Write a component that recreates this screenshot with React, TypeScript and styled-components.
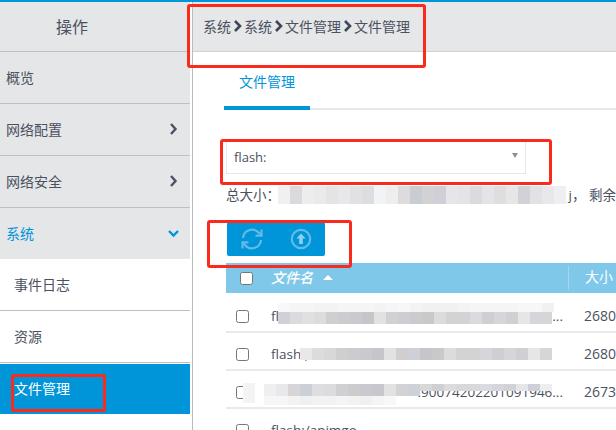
import React from "react";
import styled, { createGlobalStyle } from "styled-components";

const Global = createGlobalStyle`
  html, body { margin: 0; padding: 0; background: #fff; }
  * { box-sizing: border-box; }
`;

const Page = styled.div`
  position: relative;
  width: 616px;
  height: 430px;
  overflow: hidden;
  display: flex;
  background: #fff;
  border-top: 2px solid #0095d9;
  font-family: "Open Sans", "Noto Sans CJK SC", sans-serif;
  font-size: 14px;
  color: #4b5160;
`;

const Sidebar = styled.aside`
  width: 193px;
  height: 428px;
  flex: none;
  padding-right: 2px;
  border-right: 1px solid #b9bbbd;
`;

const SideHead = styled.div`
  height: 50px;
  background: #e4e6e8;
  border-bottom: 1px solid #bdbfc1;
  display: flex;
  align-items: center;
  justify-content: center;
  font-size: 16px;
  padding: 0 46px 1px 0;
`;

const SideItem = styled.div<{ $active?: boolean }>`
  height: ${(p) => (p.$active ? "51px" : "52px")};
  padding: 0 11px ${(p) => (p.$active ? "0" : "2px")} 6px;
  display: flex;
  align-items: center;
  justify-content: space-between;
  background: #e4e6e8;
  border-bottom: 1px solid ${(p) => (p.$active ? "#e4e6e8" : "#bdbfc1")};
  color: ${(p) => (p.$active ? "#0095d9" : "#4b5160")};
`;

const SubItem = styled.div<{ $selected?: boolean }>`
  height: ${(p) => (p.$selected ? "50px" : "52px")};
  padding: 0 14px 2px;
  display: flex;
  align-items: center;
  background: ${(p) => (p.$selected ? "#0095d9" : "#fff")};
  border-bottom: 1px solid ${(p) => (p.$selected ? "#0095d9" : "#bdbfc1")};
  color: ${(p) => (p.$selected ? "#fff" : "#4b5160")};
  margin-top: ${(p) => (p.$selected ? "1px" : "0")};
`;

const Main = styled.main`
  flex: 1;
  min-width: 0;
`;

const Crumbs = styled.div`
  height: 50px;
  padding: 0 0 2px 10px;
  display: flex;
  align-items: center;
  background: #e6e7e9;
  border-bottom: 1px solid #cfd1d3;
`;

const Sep = styled.svg`
  width: 10px;
  height: 12px;
  margin: 0 1px 0 2px;
  flex: none;
`;

const Tabs = styled.div`
  height: 58px;
  margin-left: 31px;
  display: flex;
  border-bottom: 2px solid #e6e7e9;
`;

const Tab = styled.div`
  width: 86px;
  height: 58px;
  padding-top: 4px;
  display: flex;
  align-items: center;
  justify-content: center;
  color: #0095d9;
  border-bottom: 4px solid #0095d9;
`;

const Body = styled.div`
  padding: 30px 0 0 33px;
`;

const SelectBox = styled.div`
  width: 300px;
  height: 34px;
  border: 1px solid #e6e7e9;
  display: flex;
  align-items: center;
  justify-content: space-between;
  padding: 0 7px;
  font-size: 13px;
`;

const Caret = styled.span`
  width: 0;
  height: 0;
  margin-bottom: 4px;
  border-left: 3px solid transparent;
  border-right: 3px solid transparent;
  border-top: 5px solid #8c8f94;
`;

const Total = styled.div`
  margin-top: 11px;
  height: 20px;
  line-height: 20px;
  white-space: nowrap;
  display: flex;
  justify-content: space-between;
  width: 390px;
  font-size: 13.5px;
`;

const ActionBar = styled.div`
  width: 98px;
  height: 34px;
  margin: 17px 0 0 1px;
  background: #0095d9;
  border-radius: 2px;
  display: flex;
  align-items: center;
  padding-left: 13px;
  gap: 26px;
`;

const Table = styled.div`
  margin-top: 7px;
  width: 390px;
`;

const HeadRow = styled.div`
  height: 30px;
  margin-bottom: 2px;
  background: #7fc8ea;
  display: flex;
  align-items: center;
  color: #fff;
  padding-left: 14px;
`;

const Check = styled.span`
  width: 13px;
  height: 13px;
  flex: none;
  background: #fff;
  border: 1px solid #767676;
  border-radius: 2.5px;
`;

const NameHead = styled.span`
  width: 297px;
  margin-left: 18px;
  display: flex;
  align-items: center;
  gap: 10px;
  font-weight: 500;
  font-style: italic;
  height: 24px;
  padding-bottom: 2px;
`;

const SortUp = styled.span`
  width: 0;
  height: 0;
  border-left: 5px solid transparent;
  border-right: 5px solid transparent;
  border-bottom: 5px solid #fff;
`;

const SizeHead = styled.span`
  height: 24px;
  padding-left: 16px;
  border-left: 1px solid #a3d7ef;
  line-height: 22px;
`;

const Row = styled.div`
  height: 38px;
  display: flex;
  align-items: center;
  padding: 6px 0 0 10px;
  border-bottom: 2px solid #e9eaeb;
  font-size: 13.5px;
`;

const RowName = styled.span<{ $end?: boolean }>`
  width: 292px;
  margin: 0 21px 1px 22px;
  white-space: nowrap;
  display: flex;
  justify-content: ${(p) => (p.$end ? "flex-end" : "space-between")};
`;

const RowSize = styled.span`
  font-size: 14px;
  margin-bottom: 1px;
`;

const Mosaic = styled.div<{ $x: number; $y: number }>`
  position: absolute;
  left: ${(p) => p.$x}px;
  top: ${(p) => p.$y}px;
  display: flex;
`;

const Cell = styled.i<{ $c: string; $h: number }>`
  display: block;
  width: 12px;
  height: ${(p) => p.$h}px;
  background: ${(p) => p.$c};
`;

const Mark = styled.div<{ $x: number; $y: number; $w: number; $h: number }>`
  position: absolute;
  left: ${(p) => p.$x}px;
  top: ${(p) => p.$y}px;
  width: ${(p) => p.$w}px;
  height: ${(p) => p.$h}px;
  border: 3px solid #fa2a1c;
  border-radius: 3px;
  pointer-events: none;
`;

const Chevron = ({ down, color }: { down?: boolean; color: string }) => (
  <svg width="11" height="12" viewBox="0 0 11 12">
    <path
      d={down ? "M1 4l4.5 4.5L10 4" : "M3 1l4.5 5L3 11"}
      fill="none"
      stroke={color}
      strokeWidth="2.4"
    />
  </svg>
);

const CrumbSep = () => (
  <Sep viewBox="0 0 10 12">
    <path d="M2 1l5 5-5 5" fill="none" stroke="#3f4656" strokeWidth="2.6" />
  </Sep>
);

const RefreshIcon = () => (
  <svg width="24" height="24" viewBox="0 0 24 24" fill="none" stroke="#62bae6" strokeWidth="2.2">
    <path d="M3 11a9 9 0 0 1 15.6-5.4L21 8" />
    <path d="M21.5 2.5V8.6h-6" />
    <path d="M21 13a9 9 0 0 1-15.6 5.4L3 16" />
    <path d="M2.5 21.5v-6.1h6" />
  </svg>
);

const UploadIcon = () => (
  <svg width="22" height="22" viewBox="0 0 22 22">
    <circle cx="11" cy="11" r="9.2" fill="none" stroke="#62bae6" strokeWidth="2.2" />
    <path d="M11 5.5l4.6 5h-2.8v5.5H9.2v-5.5H6.4z" fill="#8fd0ef" />
  </svg>
);

type Strip = { x: number; y: number; h: number; colors: string[] };

const strips: Strip[] = [
  { x: 278, y: 186, h: 18, colors: ["#f0f0f2", "#dcd9dd", "#eceded", "#ebeaea", "#e4e4e6", "#e8e8ea", "#e1e1e3", "#dcdde0", "#f2f3f7", "#eeeeee", "#dddbdd", "#c9ccd3", "#d2d2d4", "#d0cfd8", "#e6e6ea", "#e4e4e8", "#dbdbdf", "#e4e4e8", "#e0dde0", "#e6e6e6", "#d0d2d8", "#e2e2e6", "#e8e8ec", "#efeff1"] },
  { x: 278, y: 303, h: 9, colors: ["#f8f8f8", "#f5f5f5", "#f5f5f5", "#f3f3f3", "#f3f3f3", "#f5f5f5", "#f5f5f5", "#f5f5f5", "#f3f3f3", "#f5f5f5", "#f7f7f7", "#f3f3f3", "#f1f1f1", "#f1f1f1", "#f1f1f1", "#f3f3f3", "#f5f5f5", "#f5f5f5", "#f5f5f5", "#f5f5f5", "#f7f7f7", "#f7f7f7", "#f1f1f1"] },
  { x: 278, y: 312, h: 12, colors: ["#cfd0d8", "#dbdbde", "#e0e0e2", "#dcdcde", "#cfcfd2", "#cccccf", "#c9cad0", "#c6c6ca", "#e2e2e2", "#d2d0d3", "#cdced4", "#cbcbce", "#c9c9cc", "#dcdcde", "#d3d3d6", "#d3d3d6", "#dadadf", "#cfcfd2", "#d6d6da", "#d0d0d3", "#e6e6e6", "#d6d6da"] },
  { x: 540, y: 312, h: 12, colors: ["#d6d6da"] },
  { x: 300, y: 348, h: 12, colors: ["#e8e8ea", "#dcdcde", "#d8d8da", "#cfcfd2", "#cccccf", "#c9cad0", "#c6c6ca", "#e2e2e2", "#d0ced1", "#cdd0d8", "#c6c6ca", "#c9c9cc", "#dcdcde", "#d3d3d6", "#d3d3d6", "#d4d6dc", "#cfcfd2", "#d6d6da", "#d0d0d3", "#e6e6e6", "#d6d6da"] },
  { x: 264, y: 384, h: 12, colors: ["#efeff0", "#e8e8ea", "#d8d5d8", "#ccced8", "#dedee0", "#dcdcde", "#d0d0d2", "#cccccf", "#c9c9d0", "#c8c8cc", "#e2e2e2", "#d4d2d4", "#cdd2d8"] },
  { x: 420, y: 384, h: 7, colors: ["#d8d8da", "#d0d0d2", "#dcdcde", "#d8d8da", "#d8d8da", "#d9dbe0", "#d6d6da", "#d0d2d8", "#e6e6e6", "#cfcfd6", "#eeeeef"] },
  { x: 264, y: 396, h: 9, colors: ["#f6f6f6", "#f6f6f6", "#f2f2f2", "#f0f0f0", "#f2f2f2", "#f2f2f2", "#f4f4f4", "#f2f2f2", "#f0f0f0", "#f4f4f4", "#f8f8f8"] },
  { x: 243, y: 383, h: 20, colors: ["#f4f4f4"] },
];

const Crumb = ["系统", "系统", "文件管理", "文件管理"];

export default function App() {
  return (
    <>
      <Global />
      <Page>
        <Sidebar>
          <SideHead>操作</SideHead>
          <SideItem>概览</SideItem>
          <SideItem>
            网络配置
            <Chevron color="#4b5160" />
          </SideItem>
          <SideItem>
            网络安全
            <Chevron color="#4b5160" />
          </SideItem>
          <SideItem $active>
            系统
            <Chevron down color="#0095d9" />
          </SideItem>
          <SubItem>事件日志</SubItem>
          <SubItem>资源</SubItem>
          <SubItem $selected>文件管理</SubItem>
        </Sidebar>
        <Main>
          <Crumbs>
            {Crumb.map((c, i) => (
              <React.Fragment key={i}>
                {i > 0 && <CrumbSep />}
                <span>{c}</span>
              </React.Fragment>
            ))}
          </Crumbs>
          <Tabs>
            <Tab>文件管理</Tab>
          </Tabs>
          <Body>
            <SelectBox>
              flash:
              <Caret />
            </SelectBox>
            <Total>
              <span>总大小：</span>
              <span>j， 剩余</span>
            </Total>
            <ActionBar>
              <RefreshIcon />
              <UploadIcon />
            </ActionBar>
            <Table>
              <HeadRow>
                <Check />
                <NameHead>
                  文件名
                  <SortUp />
                </NameHead>
                <SizeHead>大小</SizeHead>
              </HeadRow>
              <Row>
                <Check />
                <RowName>
                  <span>fl</span>
                  <span>...</span>
                </RowName>
                <RowSize>2680</RowSize>
              </Row>
              <Row>
                <Check />
                <RowName>flash:,</RowName>
                <RowSize>2680</RowSize>
              </Row>
              <Row>
                <Check />
                <RowName $end>.90074202201091946...</RowName>
                <RowSize>2673</RowSize>
              </Row>
              <Row>
                <Check />
                <RowName>flash:/apimgo</RowName>
              </Row>
            </Table>
          </Body>
        </Main>
        {strips.map((s, i) => (
          <Mosaic key={i} $x={s.x} $y={s.y - 2}>
            {s.colors.map((c, j) => (
              <Cell key={j} $c={c} $h={s.h} />
            ))}
          </Mosaic>
        ))}
        <Mark $x={187} $y={2} $w={239} $h={64} />
        <Mark $x={220} $y={137} $w={332} $h={46} />
        <Mark $x={207} $y={218} $w={145} $h={48} />
        <Mark $x={11} $y={372} $w={95} $h={38} />
      </Page>
    </>
  );
}
